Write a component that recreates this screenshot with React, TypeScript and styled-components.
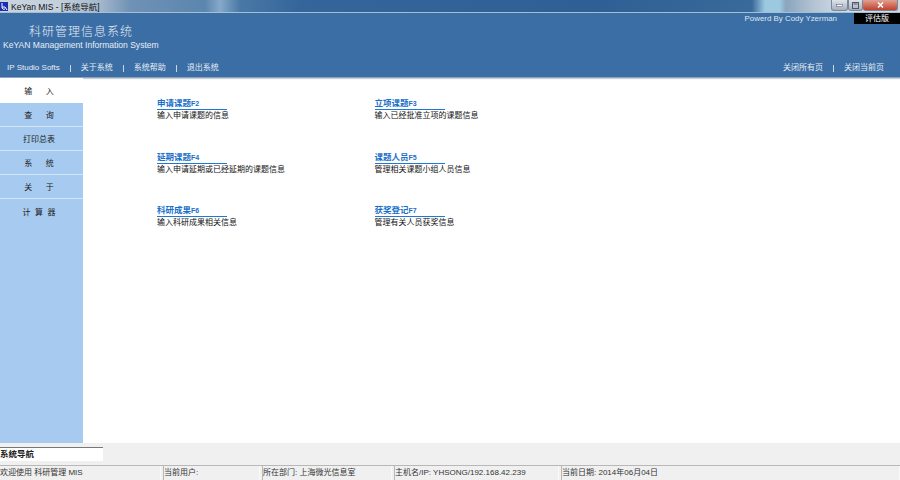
import React from "react";
import styled, { createGlobalStyle } from "styled-components";

const Global = createGlobalStyle`
  html, body { margin: 0; padding: 0; background: #fff; }
  #root { width: 900px; height: 480px; overflow: hidden; }
  * { box-sizing: border-box; }
`;
const FONT = `"Liberation Sans", "Noto Sans CJK SC", sans-serif`;

const Page = styled.div`
  width: 900px; height: 480px; display: flex; flex-direction: column;
  font-family: ${FONT}; font-size: 8px; color: #222; background: #fff;
`;
const TitleBar = styled.div`
  height: 13px; flex: none; display: flex; align-items: flex-start; justify-content: space-between;
  background: linear-gradient(90deg, #c9d4df 0, #c3cfdb 60px, #a4b8cc 100px, #6f92b5 130px, #5b86ae 205px, #86a9c9 220px, #4a78a6 240px, #35659a 300px, #2f5f94 600px, #3a6a9b 752px, #9cc8e0 765px, #9cc8e0 780px, #8aa5bd 786px, #b5c5d5 815px, #d8e0e8 850px, #cdd7e0 900px);
  border-bottom: 1px solid #a6bdd4;
`;
const TitleLeft = styled.div`display: flex; align-items: center; gap: 3px; height: 12px; color: #111; font-size: 8.5px;`;
const WinButtons = styled.div`display: flex; height: 11px; margin-right: 2px;`;
const WinButton = styled.div<{ $close?: boolean; $w: number }>`
  width: ${p => p.$w}px; height: 11px; display: flex; align-items: center; justify-content: center;
  border: 1px solid #76879a; border-top: none; border-left-width: ${p => p.$close ? 0 : 1}px;
  border-radius: 0 0 3px 3px;
  background: ${p => p.$close ? "linear-gradient(#e0a090, #c4402e)" : "linear-gradient(#dde3ea, #a4b1be)"};
`;
const Header = styled.div`
  height: 65px; flex: none; background: #3b6ea5; color: #e6edf5; display: flex; flex-direction: column;
  border-bottom: 1px solid #8ea3b8; box-shadow: 0 1px 1px #c8ced5;
`;
const HeaderTop = styled.div`display: flex; justify-content: flex-end; height: 12px;`;
const Powered = styled.div`font-size: 7.9px; line-height: 12px; color: #dfe7f0; margin-right: 17px;`;
const Trial = styled.div`width: 46px; height: 11px; background: #000; color: #fff; font-size: 8px; line-height: 11px; text-align: center;`;
const Brand = styled.div`height: 37px;`;
const CnTitle = styled.div`padding-left: 29px; font-size: 12px; line-height: 14px; letter-spacing: 1px; color: #e6edf5; font-weight: 300;`;
const EnTitle = styled.div`padding-left: 3px; margin-top: 1px; font-size: 8.55px; line-height: 11px; color: #e6edf5;`;
const NavBar = styled.div`display: flex; justify-content: space-between; padding: 0 16px 0 7px; height: 12px; line-height: 12px; font-size: 8px;`;
const NavGroup = styled.div`display: flex; align-items: center;`;
const NavSep = styled.span`width: 1px; height: 7px; background: #c8d6e6; margin: 0 10px;`;
const Body = styled.div`height: 365px; flex: none; display: flex;`;
const Side = styled.div`width: 83px; flex: none; background: #a6caf0; display: flex; flex-direction: column;`;
const SideItem = styled.div<{ $active?: boolean }>`
  height: ${p => p.$active ? 25 : 24}px; flex: none; display: flex; align-items: center; justify-content: center;
  padding-right: 5px;
  background: ${p => p.$active ? "#fff" : "transparent"}; color: #222; font-size: 8px; white-space: pre;
  border-bottom: 1px solid ${p => p.$active ? "transparent" : "#d3e4f7"};
  &:last-child { border-bottom: none; }
`;
const Content = styled.div`
  flex: 1; display: grid; grid-template-columns: 217.5px 217px; grid-auto-rows: 53.5px;
  align-content: start; padding: 20px 0 0 74px;
`;
const Entry = styled.div`display: flex; flex-direction: column;`;
const EntryTitle = styled.div`
  width: 70px; height: 12px; font-size: 8.5px; line-height: 10px; font-weight: bold; color: #1a70c8; border-bottom: 1px solid #1f78d8; white-space: nowrap;
`;
const FKey = styled.span`font-size: 7px;`;
const EntryDesc = styled.div`font-size: 8px; line-height: 12px; color: #111; white-space: nowrap;`;
const Footer = styled.div`flex: 1; background: #f0f0f0; display: flex; flex-direction: column;`;
const TabRow = styled.div`height: 22px; padding-top: 4px; flex: none;`;
const Tab = styled.div`width: 103px; height: 14px; background: #fff; border-top: 1px solid #777; font-size: 8.5px; font-weight: bold; line-height: 13px; color: #222;`;
const Status = styled.div`flex: 1; display: flex; gap: 2px; border-top: 1px solid #b8b8b8;`;
const StatusCell = styled.div<{ $w: number }>`
  width: ${p => p.$w}px; flex: none; border-left: 1px solid #b8b8b8; border-right: 1px solid #fafafa;
  font-size: 8px; line-height: 14px; color: #333; white-space: nowrap; overflow: hidden;
  &:first-child { border-left: none; }
`;

const entries = [
  ["申请课题", "F2", "输入申请课题的信息"],
  ["立项课题", "F3", "输入已经批准立项的课题信息"],
  ["延期课题", "F4", "输入申请延期或已经延期的课题信息"],
  ["课题人员", "F5", "管理相关课题小组人员信息"],
  ["科研成果", "F6", "输入科研成果相关信息"],
  ["获奖登记", "F7", "管理有关人员获奖信息"],
];
const sideItems = ["输      入", "查      询", "打印总表", "系      统", "关      于", "计  算  器"];
const cells: [number, string][] = [
  [161, "欢迎使用 科研管理 MIS"], [97, "当前用户:"], [130, "所在部门: 上海微光信息室"],
  [165, "主机名/IP: YHSONG/192.168.42.239"], [339, "当前日期: 2014年06月04日"],
];

export default function App() {
  return (
    <Page>
      <Global />
      <TitleBar>
        <TitleLeft>
          <svg width="8" height="9" viewBox="0 0 8 9"><rect width="8" height="9" fill="#1a2fb0" /><path d="M2 1v4h3l2 3M2 5a2 2 0 0 0 3 2" stroke="#fff" fill="none" strokeWidth="1" /></svg>
          KeYan MIS - [系统导航]
        </TitleLeft>
        <WinButtons>
          <WinButton $w={17}><svg width="7" height="3" viewBox="0 0 7 3"><rect x=".5" y=".5" width="6" height="2" fill="#fff" stroke="#667" strokeWidth=".6" /></svg></WinButton>
          <WinButton $w={15}><svg width="7" height="7" viewBox="0 0 7 7"><rect x=".5" y=".5" width="6" height="6" fill="none" stroke="#556" /><rect x="1.5" y="1.5" width="4" height="1" fill="#556" /></svg></WinButton>
          <WinButton $w={35} $close><svg width="7" height="6" viewBox="0 0 7 6"><path d="M1 .5l5 5M6 .5l-5 5" stroke="#fff" strokeWidth="1.5" /></svg></WinButton>
        </WinButtons>
      </TitleBar>
      <Header>
        <HeaderTop><Powered>Powerd By Cody Yzerman</Powered><Trial>评估版</Trial></HeaderTop>
        <Brand>
          <CnTitle>科研管理信息系统</CnTitle>
          <EnTitle>KeYAN Management Information System</EnTitle>
        </Brand>
        <NavBar>
          <NavGroup>
            <span>IP Studio Softs</span><NavSep /><span>关于系统</span><NavSep /><span>系统帮助</span><NavSep /><span>退出系统</span>
          </NavGroup>
          <NavGroup><span>关闭所有页</span><NavSep /><span>关闭当前页</span></NavGroup>
        </NavBar>
      </Header>
      <Body>
        <Side>
          {sideItems.map((s, i) => <SideItem key={s} $active={i === 0}>{s}</SideItem>)}
        </Side>
        <Content>
          {entries.map(([t, f, d]) => <Entry key={t}><EntryTitle>{t}<FKey>{f}</FKey></EntryTitle><EntryDesc>{d}</EntryDesc></Entry>)}
        </Content>
      </Body>
      <Footer>
        <TabRow><Tab>系统导航</Tab></TabRow>
        <Status>{cells.map(([w, t]) => <StatusCell key={t} $w={w}>{t}</StatusCell>)}</Status>
      </Footer>
    </Page>
  );
}
